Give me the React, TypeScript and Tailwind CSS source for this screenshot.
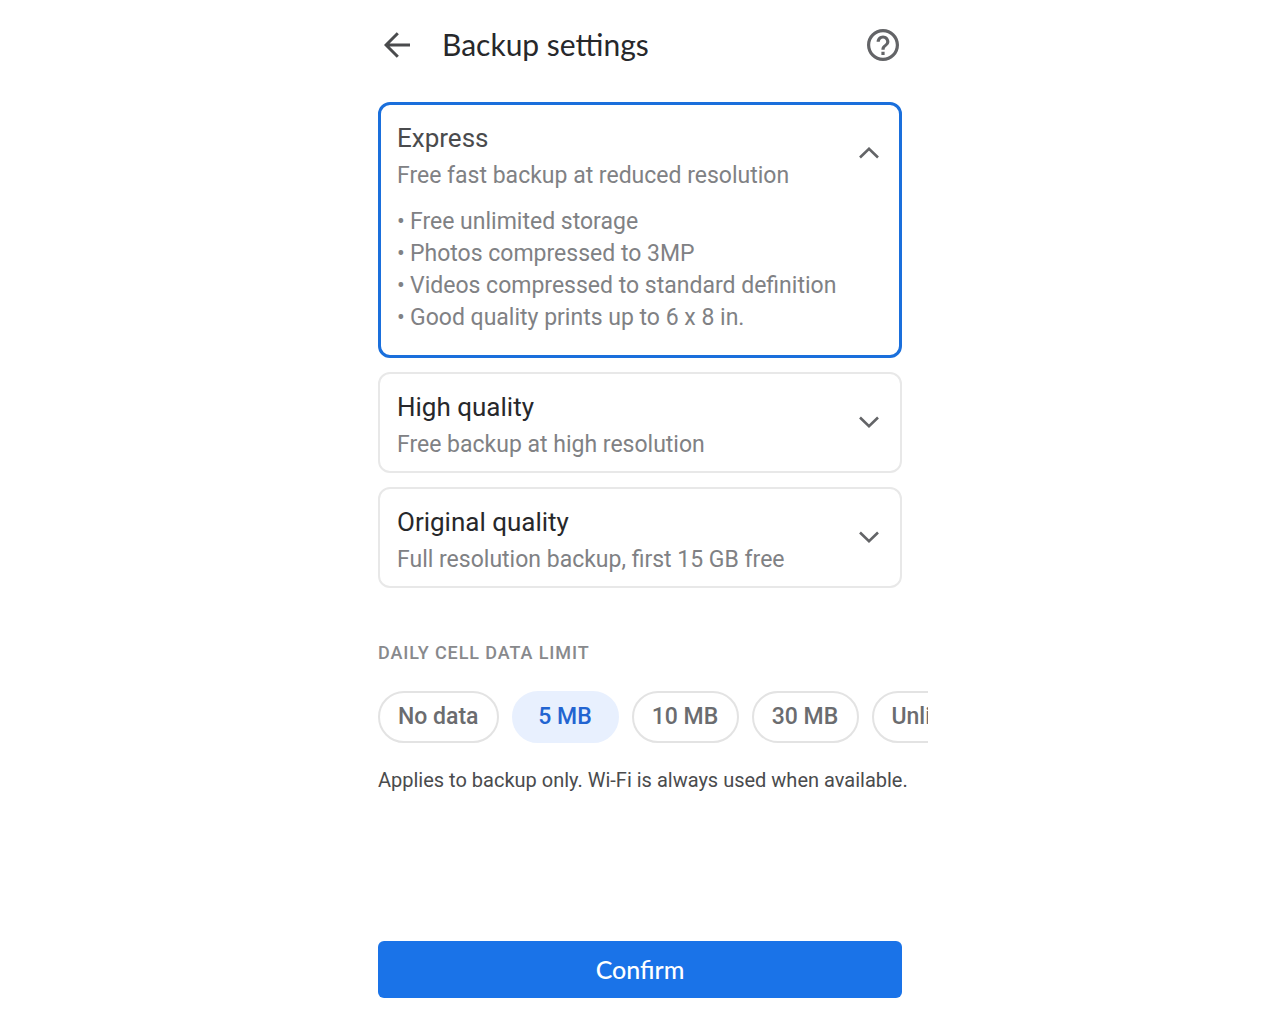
import { useState } from "react";
import clsx from "clsx";

interface Quality {
  id: string;
  title: string;
  summary: string;
  details: string[];
}

const QUALITIES: Quality[] = [
  {
    id: "express",
    title: "Express",
    summary: "Free fast backup at reduced resolution",
    details: [
      "Free unlimited storage",
      "Photos compressed to 3MP",
      "Videos compressed to standard definition",
      "Good quality prints up to 6 x 8 in.",
    ],
  },
  { id: "high", title: "High quality", summary: "Free backup at high resolution", details: [] },
  { id: "original", title: "Original quality", summary: "Full resolution backup, first 15 GB free", details: [] },
];

const LIMITS = ["No data", "5 MB", "10 MB", "30 MB", "Unlimited"];

function BackIcon() {
  return (
    <svg width="26" height="26" viewBox="0 0 26 26" fill="none" stroke="currentColor" strokeWidth="3" aria-hidden="true">
      <path d="M26 13H2.5M13.8 1.2 2 13l11.8 11.8" />
    </svg>
  );
}

function HelpIcon() {
  return (
    <svg width="32" height="32" viewBox="2 2 20 20" fill="currentColor" aria-hidden="true">
      <path d="M11 16.2h2v2h-2zM12 2C6.48 2 2 6.48 2 12s4.48 10 10 10 10-4.48 10-10S17.52 2 12 2zm0 18c-4.41 0-8-3.59-8-8s3.59-8 8-8 8 3.59 8 8-3.59 8-8 8zM12 6c-2.21 0-4 1.79-4 4h2c0-1.100.9-2 2-2s2 .9 2 2c0 2-3 1.750-3 5h2c0-2.250 3-2.500 3-5 0-2.210-1.790-4-4-4z" />
    </svg>
  );
}

function Chevron({ up }: { up: boolean }) {
  return (
    <svg width="20" height="12" viewBox="0 0 20 12" fill="none" stroke="currentColor" strokeWidth="2.6" aria-hidden="true">
      <path d={up ? "M1 10.5 10 1.8l9 8.7" : "M1 1.5l9 8.7 9-8.7"} />
    </svg>
  );
}

function QualityCard({ quality, open, onSelect }: { quality: Quality; open: boolean; onSelect: () => void }) {
  return (
    <section className={clsx("rounded-xl", open ? "border-3 border-[#1a6fdc]" : "border-2 border-[#e8e8e8]")}>
      <button
        type="button"
        aria-expanded={open}
        onClick={onSelect}
        className={clsx(
          "flex w-full items-center justify-between pt-[15px] pb-[6px] text-left",
          open ? "px-4" : "px-[17px]",
        )}
      >
        <span>
          <span className={clsx("block text-[26px] leading-9", open ? "text-[#4a4b4d]" : "text-[#27282b]")}>
            {quality.title}
          </span>
          <span className="block text-[23px] leading-10 text-[#808184]">{quality.summary}</span>
        </span>
        <span className="mr-1 flex pb-[10px] text-[#636467]">
          <Chevron up={open} />
        </span>
      </button>
      {open && quality.details.length > 0 && (
        <ul className="px-4 pt-1 pb-[21px] text-[23px] leading-8 text-[#808184]">
          {quality.details.map((d) => (
            <li key={d} className="flex">
              <span className="w-[13px]">•</span>
              {d}
            </li>
          ))}
        </ul>
      )}
    </section>
  );
}

export default function App() {
  const [quality, setQuality] = useState("express");
  const [limit, setLimit] = useState("5 MB");

  return (
    <div className="min-h-screen bg-white font-['Roboto',sans-serif]">
      <main className="mx-auto flex min-h-screen max-w-xl flex-col pb-[26px]">
        <header className="flex h-[90px] items-center pr-[29px] pl-8">
          <button type="button" aria-label="Back" className="text-[#4a4b4d]">
            <BackIcon />
          </button>
          <h1 className="ml-8 pb-0.5 font-['Lato',sans-serif] text-[30px] leading-9 text-[#27282b]">
            Backup settings
          </h1>
          <button type="button" aria-label="Help" className="ml-auto text-[#636467]">
            <HelpIcon />
          </button>
        </header>

        <div className="mt-3 flex flex-col gap-[14px] px-[26px]">
          {QUALITIES.map((q) => (
            <QualityCard key={q.id} quality={q} open={q.id === quality} onSelect={() => setQuality(q.id)} />
          ))}
        </div>

        <h2 className="mt-[53px] px-[26px] text-lg leading-6 font-medium tracking-wider text-[#88898c]">
          DAILY CELL DATA LIMIT
        </h2>
        {/* the last chip runs off the edge, the row scrolls sideways */}
        <div className="mt-[26px] flex gap-[13px] overflow-x-auto pl-[26px] [scrollbar-width:none]">
          {LIMITS.map((l) => (
            <button
              key={l}
              type="button"
              aria-pressed={l === limit}
              onClick={() => setLimit(l)}
              className={clsx(
                "h-[52px] min-w-[107px] shrink-0 rounded-full border-2 px-[18px] text-[23px] font-medium",
                l === limit ? "border-[#e8f0fe] bg-[#e8f0fe] text-[#2264d1]" : "border-[#e3e3e3] text-[#6b6c6f]",
              )}
            >
              {l}
            </button>
          ))}
        </div>
        <p className="mt-[23px] pl-[26px] text-xl leading-7 text-[#4a4b4d]">
          Applies to backup only. Wi-Fi is always used when available.
        </p>

        <div className="mt-auto px-[26px] pt-8">
          <button
            type="button"
            className="block h-[57px] w-full rounded-md bg-[#1a73e8] font-['Lato',sans-serif] text-[25px] font-medium text-white"
          >
            Confirm
          </button>
        </div>
      </main>
    </div>
  );
}
